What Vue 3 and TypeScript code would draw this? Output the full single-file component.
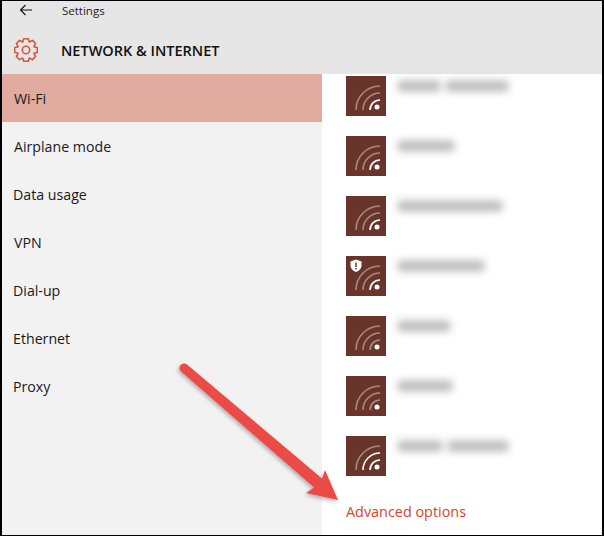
<script setup lang="ts">
const navItems = [
  { label: 'Wi-Fi', active: true, inset: false },
  { label: 'Airplane mode', active: false, inset: false },
  { label: 'Data usage', active: false, inset: true },
  { label: 'VPN', active: false, inset: false },
  { label: 'Dial-up', active: false, inset: true },
  { label: 'Ethernet', active: false, inset: true },
  { label: 'Proxy', active: false, inset: true }
]

// names are blurred in the source, so only the widths of their words are kept
const networks = [
  { words: [42, 62], bright: 1, secured: false },
  { words: [56], bright: 1, secured: false },
  { words: [104], bright: 1, secured: false },
  { words: [86], bright: 1, secured: true },
  { words: [52], bright: 0, secured: false },
  { words: [54], bright: 0, secured: false },
  { words: [44, 60], bright: 2, secured: false }
]

const arcs = [
  { r: 10, level: 1 },
  { r: 17, level: 2 },
  { r: 24, level: 3 }
]

const arcPath = (r: number) => `M${34 - r} 34A${r} ${r} 0 0 1 34 ${34 - r}`

const gearPath = (() => {
  const teeth = 8
  const pts: string[] = []
  for (let i = 0; i < teeth; i++) {
    const a = (i * Math.PI * 2) / teeth - Math.PI / 2
    const step = (Math.PI * 2) / teeth
    const ring: [number, number][] = [
      [-0.5, 8.6],
      [-0.24, 11.6],
      [0.24, 11.6],
      [0.5, 8.6]
    ]
    for (const [off, r] of ring) {
      const t = a + off * step
      pts.push(`${(12 + r * Math.cos(t)).toFixed(2)} ${(12 + r * Math.sin(t)).toFixed(2)}`)
    }
  }
  return `M${pts.join('L')}Z`
})()
</script>

<template>
  <div class="frame">
    <header class="header">
      <div class="topline">
        <svg class="back" width="14" height="12" viewBox="0 0 14 12">
          <path d="M13 6H1.500M6.500 1 1.500 6l5 5" fill="none" stroke="#111" stroke-width="1.100" />
        </svg>
        <span class="app-name">Settings</span>
      </div>
      <div class="titleline">
        <svg class="gear" width="24" height="24" viewBox="0 0 24 24">
          <path :d="gearPath" fill="none" stroke="#d8553c" stroke-width="1.600" stroke-linejoin="round" />
          <circle cx="12" cy="12" r="3.700" fill="none" stroke="#d8553c" stroke-width="1.600" />
        </svg>
        <h1 class="title">NETWORK &amp; INTERNET</h1>
      </div>
    </header>

    <div class="body">
      <nav class="sidebar">
        <div
          v-for="item in navItems"
          :key="item.label"
          class="nav-item"
          :class="{ active: item.active, inset: item.inset }"
        >
          {{ item.label }}
        </div>
      </nav>

      <main class="content">
        <div class="list">
          <div v-for="(net, i) in networks" :key="i" class="network">
            <div class="tile">
              <svg width="40" height="40" viewBox="0 0 40 40">
                <path
                  v-for="arc in arcs"
                  :key="arc.r"
                  :d="arcPath(arc.r)"
                  fill="none"
                  stroke="#fff"
                  stroke-width="1.600"
                  :stroke-opacity="arc.level <= net.bright ? 1 : 0.42"
                />
                <circle cx="31" cy="31" r="2.500" fill="#fff" />
                <template v-if="net.secured">
                  <path d="M4.500 5.500 10 3.500l5.500 2v4.200c0 3-2.400 5-5.500 6.300-3.100-1.300-5.500-3.300-5.500-6.300Z" fill="#fff" />
                  <path d="M10 6.500v4.500M10 12v1.500" stroke="#69352b" stroke-width="1.500" fill="none" />
                </template>
              </svg>
            </div>
            <div class="blur-name">
              <span v-for="(w, j) in net.words" :key="j" class="blur-word" :style="{ width: w + 'px' }"></span>
            </div>
          </div>
        </div>
        <a class="advanced">Advanced options</a>
      </main>
    </div>

    <svg class="arrow" width="604" height="536" viewBox="0 0 604 536">
      <defs>
        <filter id="arrow-shadow" x="-10%" y="-10%" width="125%" height="125%">
          <feDropShadow dx="-1" dy="2" stdDeviation="2" flood-color="#000" flood-opacity="0.3" />
        </filter>
      </defs>
      <path
        filter="url(#arrow-shadow)"
        d="M187 364.600 322 478.400 325 470 338 500 306 493 314 487.600 181 371.400A4.500 4.500 0 0 1 187 364.600Z"
        fill="#ea4c46"
      />
    </svg>
  </div>
</template>

<style>
html,
body {
  margin: 0;
  background: #fff;
}
</style>

<style scoped>
.frame {
  position: relative;
  box-sizing: border-box;
  width: 604px;
  height: 536px;
  border: solid #000;
  border-width: 1px 2px 1px 2px;
  background: #fff;
  display: flex;
  flex-direction: column;
  overflow: hidden;
  font-family: 'Open Sans', 'Noto Sans', sans-serif;
  color: #111;
}

.header {
  height: 73px;
  flex: none;
  background: #e6e6e6;
  display: flex;
  flex-direction: column;
}

.topline {
  height: 18px;
  display: flex;
  align-items: center;
  padding-left: 17px;
}

.back {
  margin-right: 29px;
}

.app-name {
  font-size: 11.500px;
  color: #222;
}

.titleline {
  display: flex;
  align-items: center;
  padding: 19px 0 0 12px;
}

.gear {
  margin-right: 23px;
}

.title {
  margin: 0;
  font-size: 14.500px;
  font-weight: 600;
  color: #111;
}

.body {
  flex: 1;
  display: flex;
  min-height: 0;
}

.sidebar {
  width: 320px;
  flex: none;
  background: #f2f2f2;
}

.nav-item {
  height: 48px;
  display: flex;
  align-items: center;
  padding-left: 12px;
  font-size: 14.200px;
  color: #1a1a1a;
}

.nav-item.inset {
  padding-left: 11px;
}

.nav-item.active {
  background: #e2ab9f;
}

.content {
  flex: 1;
  padding: 2px 0 0 24px;
  display: flex;
  flex-direction: column;
}

.list {
  display: flex;
  flex-direction: column;
  gap: 20px;
}

.network {
  display: flex;
  height: 40px;
  gap: 12px;
}

.tile {
  width: 40px;
  height: 40px;
  background: #69352b;
  flex: none;
}

.tile svg {
  display: block;
}

.blur-name {
  display: flex;
  gap: 6px;
  height: 10px;
  margin-top: 5px;
}

.blur-word {
  display: block;
  height: 10px;
  background: #b4b4b4;
  filter: blur(4px);
}

.advanced {
  margin-top: 26px;
  font-size: 14.400px;
  color: #d8452f;
}

.arrow {
  position: absolute;
  left: -2px;
  top: -1px;
  pointer-events: none;
}
</style>
